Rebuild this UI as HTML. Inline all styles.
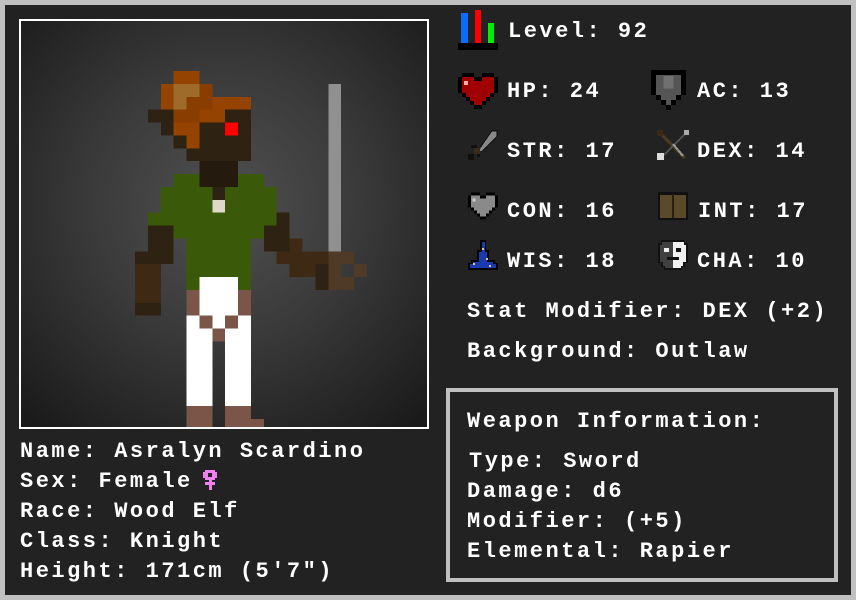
<!DOCTYPE html>
<html><head><meta charset="utf-8"><style>
html,body{margin:0;padding:0}
body{width:856px;height:600px;background:#c0c0c0;position:relative;overflow:hidden}
#main{position:absolute;left:5px;top:5px;width:846px;height:590px;background:#222}
.t{position:absolute;font-family:"Liberation Mono",monospace;font-weight:bold;font-size:22px;line-height:21px;letter-spacing:2.5px;color:#fff;white-space:pre}
#portrait{position:absolute;left:19px;top:19px;width:406px;height:406px;border:2px solid #fff;background:radial-gradient(circle at 50% 45%,#505050 0%,#3a3a3a 45%,#181818 100%);overflow:hidden}
#weapon{position:absolute;left:446px;top:388px;width:384px;height:186px;border:4px solid #c0c0c0}
svg{position:absolute;shape-rendering:crispEdges}
</style></head><body>
<div id="main"></div>
<div id="portrait">
<svg style="left:114px;top:50px" width="250" height="380" viewBox="0 0 19.4 29.5">
<g>
<rect x="15" y="1" width="1" height="13" fill="#909090"/>
<rect x="3" y="0" width="2" height="1" fill="#944400"/>
<rect x="2" y="1" width="1" height="2" fill="#944400"/>
<rect x="3" y="1" width="2" height="1" fill="#9e6b2a"/>
<rect x="3" y="2" width="1" height="1" fill="#9e6b2a"/>
<rect x="5" y="1" width="1" height="1" fill="#8a3d00"/>
<rect x="4" y="2" width="2" height="1" fill="#8a3d00"/>
<rect x="6" y="2" width="3" height="1" fill="#944400"/>
<rect x="1" y="3" width="2" height="1" fill="#2e2212"/>
<rect x="3" y="3" width="2" height="1" fill="#8a3d00"/>
<rect x="5" y="3" width="2" height="1" fill="#944400"/>
<rect x="7" y="3" width="2" height="1" fill="#2e2212"/>
<rect x="2" y="4" width="1" height="1" fill="#2e2212"/>
<rect x="3" y="4" width="2" height="1" fill="#944400"/>
<rect x="5" y="4" width="4" height="1" fill="#2e2212"/>
<rect x="7" y="4" width="1" height="1" fill="#ff0000"/>
<rect x="3" y="5" width="1" height="1" fill="#2e2212"/>
<rect x="4" y="5" width="1" height="1" fill="#944400"/>
<rect x="5" y="5" width="4" height="1" fill="#2e2212"/>
<rect x="4" y="6" width="5" height="1" fill="#2e2212"/>
<rect x="5" y="7" width="3" height="2" fill="#241a0e"/>
<rect x="3" y="8" width="2" height="1" fill="#3a5a0a"/>
<rect x="8" y="8" width="2" height="1" fill="#3a5a0a"/>
<rect x="2" y="9" width="9" height="2" fill="#3a5a0a"/>
<rect x="6" y="9" width="1" height="1" fill="#2e2212"/>
<rect x="6" y="10" width="1" height="1" fill="#e0d8c8"/>
<rect x="1" y="11" width="10" height="1" fill="#3a5a0a"/>
<rect x="11" y="11" width="1" height="1" fill="#2e2212"/>
<rect x="1" y="12" width="2" height="2" fill="#2e2212"/>
<rect x="3" y="12" width="7" height="1" fill="#3a5a0a"/>
<rect x="10" y="12" width="2" height="2" fill="#2e2212"/>
<rect x="4" y="13" width="5" height="4" fill="#3a5a0a"/>
<rect x="12" y="13" width="1" height="1" fill="#3e2a14"/>
<rect x="0" y="14" width="3" height="1" fill="#2e2212"/>
<rect x="11" y="14" width="4" height="1" fill="#3e2a14"/>
<rect x="15" y="14" width="2" height="1" fill="#4e3a26"/>
<rect x="0" y="15" width="2" height="3" fill="#3e2a14"/>
<rect x="12" y="15" width="2" height="1" fill="#3e2a14"/>
<rect x="14" y="15" width="1" height="2" fill="#2e2212"/>
<rect x="15" y="15" width="1" height="2" fill="#4e3a26"/>
<rect x="17" y="15" width="1" height="1" fill="#4e3a26"/>
<rect x="16" y="16" width="1" height="1" fill="#4e3a26"/>
<rect x="0" y="18" width="2" height="1" fill="#2e2212"/>
<rect x="5" y="16" width="3" height="3" fill="#fff"/>
<rect x="4" y="17" width="1" height="2" fill="#7a5548"/>
<rect x="8" y="17" width="1" height="2" fill="#7a5548"/>
<rect x="4" y="19" width="1" height="1" fill="#fff"/>
<rect x="5" y="19" width="1" height="1" fill="#7a5548"/>
<rect x="6" y="19" width="1" height="1" fill="#fff"/>
<rect x="7" y="19" width="1" height="1" fill="#7a5548"/>
<rect x="8" y="19" width="1" height="1" fill="#fff"/>
<rect x="4" y="20" width="2" height="6" fill="#fff"/>
<rect x="6" y="20" width="1" height="1" fill="#7a5548"/>
<rect x="7" y="20" width="2" height="6" fill="#fff"/>
<rect x="4" y="26" width="2" height="2" fill="#7a5548"/>
<rect x="7" y="26" width="2" height="2" fill="#7a5548"/>
<rect x="9" y="27" width="1" height="1" fill="#7a5548"/>
</g></svg>
</div>

<svg style="left:458px;top:10px" width="40" height="40" viewBox="0 0 40 40">
<rect x="3" y="3" width="7" height="30" fill="#0a6cff"/>
<rect x="17" y="0" width="6" height="33" fill="#ff0000"/>
<rect x="30" y="13" width="6" height="20" fill="#00ee00"/>
<rect x="0" y="33" width="40" height="7" fill="#000"/>
</svg>
<svg style="left:458px;top:73px" width="40" height="38" viewBox="0 0 10 9.5">
<path d="M1 0h3v1h2V0h3v1h1v4H9v1H8v1H7v1H6v1H4V8H3V7H2V6H1V5H0V1h1z" fill="#000"/>
<path d="M1 1h3v1h2V1h3v4H8v1H7v1H6v1H4V7H3V6H2V5H1z" fill="#a00000"/>
<rect x="1.5" y="2" width="1" height="1" fill="#f0b0b0"/>
</svg>
<svg style="left:651px;top:70px" width="35" height="40" viewBox="0 0 7 8">
<path d="M0 0h7v5H6v1H5v1H4v1H3V7H2V6H1V5H0z" fill="#000"/>
<path d="M1 1h5v4H5v1H4v1H3V6H2V5H1z" fill="#555"/>
<rect x="2.5" y="1.2" width="2" height="2.5" fill="#707070"/>
</svg>
<svg style="left:468px;top:130px" width="30" height="30" viewBox="0 0 10 10">
<path d="M8 0h2v2L5 7H3z" fill="#111"/>
<path d="M8 0.5h1.5v1.5L4.5 7H3.5z" fill="#888"/>
<rect x="1" y="5" width="2" height="1" fill="#111"/>
<rect x="3" y="7" width="1" height="2" fill="#111"/>
<rect x="2" y="6" width="2" height="2" fill="#3e2a14"/>
<rect x="0" y="8" width="2" height="2" fill="#111"/>
</svg>
<svg style="left:657px;top:130px" width="32" height="30" viewBox="0 0 32 30">
<path d="M2 2 L28 28" stroke="#4a3a20" stroke-width="3"/>
<path d="M30 2 L4 28" stroke="#555" stroke-width="2"/>
<path d="M16 14 L26 26" stroke="#999" stroke-width="2"/>
<rect x="0" y="0" width="6" height="6" fill="#3a2a14"/>
<rect x="0" y="23" width="7" height="7" fill="#ddd"/>
<rect x="27" y="0" width="5" height="5" fill="#aaa"/>
</svg>
<svg style="left:468px;top:192px" width="30" height="28" viewBox="0 0 10 9">
<path d="M1 0h3v1h2V0h3v1h1v4H9v1H8v1H7v1H6v1H4V8H3V7H2V6H1V5H0V1h1z" fill="#000"/>
<path d="M1 1h3v1h2V1h3v4H8v1H7v1H6v1H4V7H3V6H2V5H1z" fill="#8a8a8a"/>
<rect x="1.5" y="2" width="1" height="1" fill="#ccc"/>
</svg>
<svg style="left:658px;top:192px" width="30" height="28" viewBox="0 0 30 28">
<rect x="0" y="0" width="30" height="28" fill="#111"/>
<rect x="2" y="3" width="12" height="23" fill="#5a4a2a"/>
<rect x="16" y="3" width="12" height="23" fill="#5a4a2a"/>
<rect x="14" y="2" width="2" height="24" fill="#2a2010"/>
</svg>
<svg style="left:468px;top:240px" width="30" height="30" viewBox="0 0 30 30">
<path d="M12 0h6v10h3v10h6v3h3v7H0v-7h3v-3h6V10h3z" fill="#000"/>
<path d="M14 2h3v10h2v10h6v2h3v4H2v-4h3v-2h6V12h3z" fill="#1a3ab0"/>
<rect x="14" y="8" width="2" height="2" fill="#d8c880"/>
<rect x="18" y="18" width="2" height="2" fill="#d8c880"/>
<rect x="5" y="23" width="2" height="2" fill="#d8c880"/>
<rect x="21" y="25" width="2" height="2" fill="#d8c880"/>
</svg>
<svg style="left:658px;top:240px" width="30" height="30" viewBox="0 0 30 30">
<path d="M3 0h24v3h3v20h-3v4h-3v3H6v-3H3v-4H0V3h3z" fill="#111"/>
<path d="M15 2h11v3h2v17h-3v4h-2v2H15z" fill="#f0f0f0"/>
<path d="M4 2h11v26H7v-2H5v-4H2V5h2z" fill="#404040"/>
<rect x="6" y="8" width="5" height="4" fill="#f0f0f0"/>
<rect x="18" y="8" width="5" height="4" fill="#111"/>
<path d="M9 17h12v3H9z" fill="#111"/>
</svg>

<div class="t" style="left:508px;top:21px">Level: 92</div>
<div class="t" style="left:507px;top:81px">HP: 24</div>
<div class="t" style="left:697px;top:81px">AC: 13</div>
<div class="t" style="left:507px;top:141px">STR: 17</div>
<div class="t" style="left:697px;top:141px">DEX: 14</div>
<div class="t" style="left:507px;top:201px">CON: 16</div>
<div class="t" style="left:698px;top:201px">INT: 17</div>
<div class="t" style="left:507px;top:251px">WIS: 18</div>
<div class="t" style="left:697px;top:251px">CHA: 10</div>
<div class="t" style="left:467px;top:301px">Stat Modifier: DEX (+2)</div>
<div class="t" style="left:467px;top:341px">Background: Outlaw</div>

<div id="weapon"></div>
<div class="t" style="left:467px;top:411px">Weapon Information:</div>
<div class="t" style="left:469px;top:451px">Type: Sword</div>
<div class="t" style="left:467px;top:481px">Damage: d6</div>
<div class="t" style="left:467px;top:511px">Modifier: (+5)</div>
<div class="t" style="left:467px;top:541px">Elemental: Rapier</div>

<div class="t" style="left:20px;top:441px">Name: Asralyn Scardino</div>
<div class="t" style="left:20px;top:471px">Sex: Female</div>
<svg style="left:203px;top:470px" width="14" height="20" viewBox="0 0 14 20">
<path d="M2 0h10v2h2v6h-2v2H9v2h3v3H9v5H6v-5H2v-3h4v-2H2V8H0V2h2z" fill="#f080f0"/>
<rect x="5" y="3" width="4" height="4" fill="#222"/>
</svg>
<div class="t" style="left:20px;top:501px">Race: Wood Elf</div>
<div class="t" style="left:20px;top:531px">Class: Knight</div>
<div class="t" style="left:20px;top:561px">Height: 171cm (5'7")</div>
</body></html>
